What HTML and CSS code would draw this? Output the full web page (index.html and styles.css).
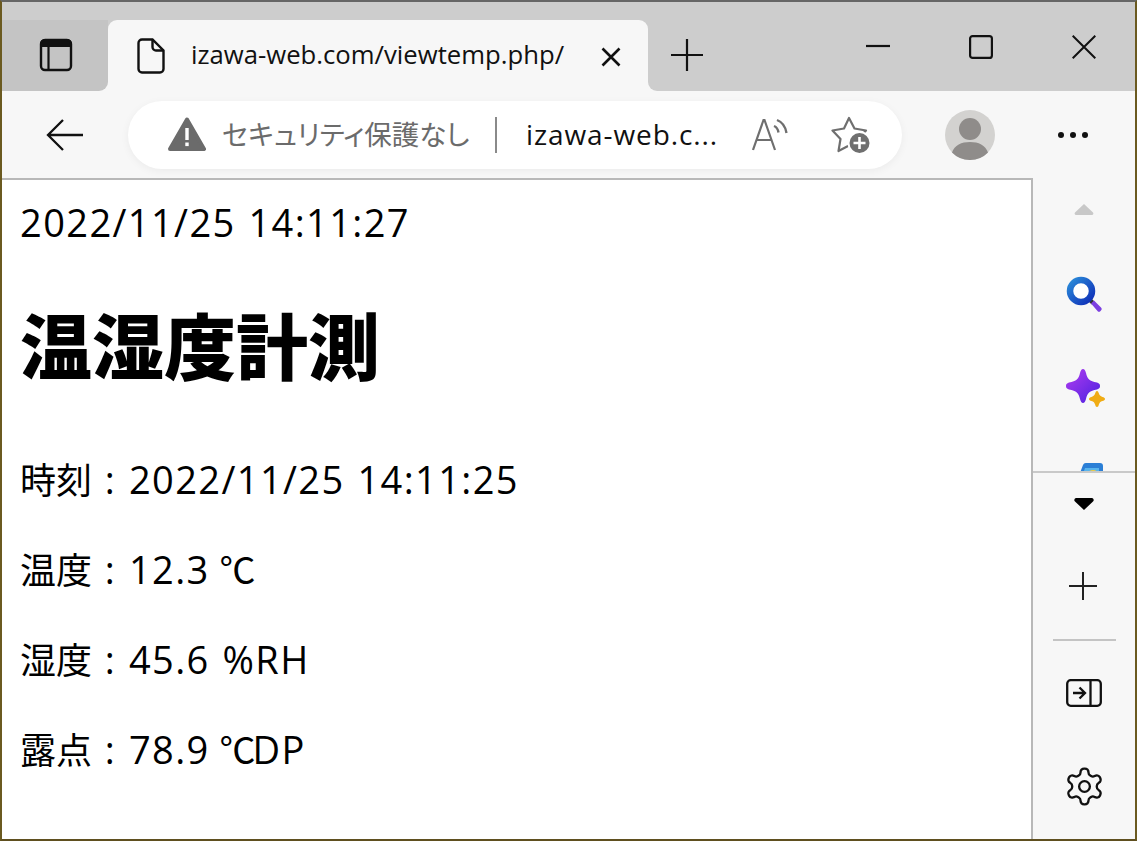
FILE: index.html
```html
<!DOCTYPE html>
<html lang="ja">
<head>
    <meta charset="UTF-8">
    <meta name="viewport" content="width=device-width, initial-scale=1.0">
    <title>温湿度計測</title>
    <link rel="stylesheet" href="styles.css">
</head>
<body>
<div class="window">
    <div class="titlebar">
        <div class="tab-side">
            <svg width="34" height="34" viewBox="0 0 34 34"><rect x="2" y="2" width="30" height="30" rx="4" fill="#c4c4c4" stroke="#111" stroke-width="2.4"/><path d="M2 8V6a4 4 0 0 1 4-4h22a4 4 0 0 1 4 4v2z" fill="#111" stroke="#111" stroke-width="2"/><path d="M9.5 8v24" stroke="#111" stroke-width="2.2"/></svg>
        </div>
        <div class="tab">
            <svg class="tab-icon" width="28" height="36" viewBox="0 0 28 36"><path d="M5 1.5h10.5L26.5 12.5V31a3.5 3.5 0 0 1-3.5 3.5H5A3.5 3.5 0 0 1 1.5 31V5A3.5 3.5 0 0 1 5 1.5z" fill="none" stroke="#111" stroke-width="2.4"/><path d="M15.5 1.5V9a3.5 3.5 0 0 0 3.5 3.5h7.5" fill="none" stroke="#111" stroke-width="2.4"/></svg>
            <span class="tab-title">izawa-web.com/viewtemp.php/</span>
            <svg class="tab-close" width="20" height="20" viewBox="0 0 20 20"><path d="M1.5 1.5l17 17M18.500 1.500l-17 17" stroke="#111" stroke-width="2.6"/></svg>
        </div>
        <div class="tab-new">
            <svg width="32" height="32" viewBox="0 0 32 32"><path d="M0 16h32M16 0v32" stroke="#111" stroke-width="2.2"/></svg>
        </div>
        <div class="controls">
            <div class="control"><svg width="24" height="24" viewBox="0 0 24 24"><path d="M0 11h24" stroke="#111" stroke-width="2.2"/></svg></div>
            <div class="control"><svg width="24" height="24" viewBox="0 0 24 24"><rect x="1.100" y="1.100" width="21.800" height="21.800" rx="2.500" fill="none" stroke="#111" stroke-width="2.200"/></svg></div>
            <div class="control"><svg width="24" height="24" viewBox="0 0 24 24"><path d="M.7.7l22.600 22.600M23.300.7L.7 23.300" stroke="#111" stroke-width="2"/></svg></div>
        </div>
    </div>

    <div class="toolbar">
        <div class="back">
            <svg width="38" height="32" viewBox="0 0 38 32"><path d="M37 16H2M17 1L2 16l15 15" fill="none" stroke="#111" stroke-width="2.300"/></svg>
        </div>
        <div class="address">
            <svg class="warn" width="38" height="35" viewBox="0 0 38 35"><path d="M19 2.500L36 32H2z" fill="#6b6b6b" stroke="#6b6b6b" stroke-width="4" stroke-linejoin="round"/><rect x="17.300" y="11" width="3.400" height="12" fill="#fff"/><rect x="17.300" y="25.500" width="3.400" height="3.600" fill="#fff"/></svg>
            <span class="security">セキュリティ保護なし</span>
            <span class="sep"></span>
            <span class="url">izawa-web.c...</span>
            <svg class="read" width="38" height="36" viewBox="0 0 38 36"><path d="M1 33L11.500 3h1L23 33M4.500 23h15" fill="none" stroke="#6f6f6f" stroke-width="2.200"/><path d="M22 9c2.500 1 4 3.500 4.500 6.500M25 3c5 2 8.500 6.500 9.500 13" fill="none" stroke="#6f6f6f" stroke-width="2.400"/></svg>
            <svg class="fav" width="40" height="38" viewBox="0 0 40 38"><path d="M18 2l5.500 10.500 11.500 2-8 8.500 1.500 12-10.500-5.500L7.500 35l2-12-8-8.500 11.500-2z" fill="none" stroke="#6f6f6f" stroke-width="2.200" stroke-linejoin="round"/><circle cx="28.500" cy="27" r="12" fill="#fff"/><circle cx="28.500" cy="27" r="10" fill="#6f6f6f"/><path d="M22.500 27h12M28.500 21v12" stroke="#fff" stroke-width="2.600"/></svg>
        </div>
        <div class="avatar">
            <svg width="50" height="50" viewBox="0 0 50 50"><circle cx="25" cy="25" r="25" fill="#d3d2d0"/><circle cx="25" cy="19" r="11" fill="#8f8c8a"/><path d="M7 42.500C9.500 35 16.500 32 25 32s15.500 3 18 10.500A25 25 0 0 1 25 50 25 25 0 0 1 7 42.500z" fill="#8f8c8a"/></svg>
        </div>
        <div class="more"><span></span><span></span><span></span></div>
    </div>

    <div class="main">
        <div class="page">
            <div class="now">2022/11/25 14:11:27</div>
            <h1>温湿度計測</h1>
            <p><span class="cjk">時刻</span> : 2022/11/25 14:11:25</p>
            <p><span class="cjk">温度</span> : 12.3 <span class="cjk deg">℃</span></p>
            <p><span class="cjk">湿度</span> : 45.6 %RH</p>
            <p><span class="cjk">露点</span> : 78.9 <span class="cjk deg">℃</span>DP</p>
        </div>
        <div class="sidebar">
            <div class="side-apps">
                <svg class="arrow-up" width="20" height="12" viewBox="0 0 20 12"><path d="M10 1L19 9.500a1.500 1.500 0 0 1-1 2.500H2a1.500 1.500 0 0 1-1-2.500z" fill="#c8c8c8"/></svg>
                <svg class="app-search" width="38" height="38" viewBox="0 0 38 38"><defs><linearGradient id="lens" x1="0" y1="0" x2="1" y2="1"><stop offset="0" stop-color="#2a8ad8"/><stop offset="1" stop-color="#0f2fb8"/></linearGradient></defs><path d="M24 24l3 3" stroke="#333" stroke-width="4"/><path d="M25 27.500l3-3 7 7a2 2 0 0 1 0 3l-.5.500a2 2 0 0 1-3 0z" fill="#7c3fe0"/><circle cx="15" cy="15" r="11" fill="#fff" stroke="url(#lens)" stroke-width="6.500"/></svg>
                <svg class="app-spark" width="40" height="40" viewBox="0 0 40 40"><defs><linearGradient id="star" x1="0" y1="0" x2="1" y2="1"><stop offset="0" stop-color="#b23cf0"/><stop offset="1" stop-color="#4a20e0"/></linearGradient></defs><path d="M17 0c1.500 0 2.200 1.500 3 4 1.200 6 3.500 8 11 9.500 2.500.8 3 1.800 3 3.500s-.5 2.700-3 3.500c-7.500 1.500-9.800 3.500-11 9.500-.8 2.500-1.500 4-3 4s-2.200-1.500-3-4c-1.200-6-3.500-8-11-9.500C.500 19.700 0 18.700 0 17s.5-2.700 3-3.500C10.500 12 12.800 10 14 4c.8-2.500 1.500-4 3-4z" fill="url(#star)"/><path d="M31 22c1 0 1.400 1 1.800 2.300.6 2 1.500 3 3.700 3.700 1.400.4 2.500.9 2.500 2s-1.100 1.600-2.500 2c-2.200.7-3.100 1.700-3.700 3.700C32.400 37 32 38 31 38s-1.400-1-1.800-2.300c-.6-2-1.500-3-3.700-3.700-1.400-.4-2.500-.9-2.500-2s1.100-1.600 2.500-2c2.200-.7 3.100-1.700 3.700-3.700C29.600 23 30 22 31 22z" fill="#f0ac14"/></svg>
                <svg class="app-clip" width="28" height="24" viewBox="0 0 28 24"><path d="M0 24L8 3a3 3 0 0 1 3-2h14a3 3 0 0 1 3 3v20z" fill="#2b7fd6"/><path d="M4 24L10 6h14v18z" fill="#58b4ec"/><circle cx="18" cy="15" r="7" fill="#f4cc3c"/></svg>
            </div>
            <div class="side-tools">
                <svg class="arrow-down" width="20" height="12" viewBox="0 0 20 12"><path d="M10 12L1 3.500A2 2 0 0 1 2 0h16a2 2 0 0 1 1 3.500z" fill="#000"/></svg>
                <svg class="side-add" width="28" height="28" viewBox="0 0 28 28"><path d="M0 14h28M14 0v28" stroke="#222" stroke-width="2"/></svg>
                <div class="side-line"></div>
                <svg class="side-panel" width="36" height="28" viewBox="0 0 36 28"><rect x="1.200" y="1.200" width="33.600" height="25.600" rx="3.500" fill="none" stroke="#111" stroke-width="2.300"/><path d="M24.500 1v26" stroke="#111" stroke-width="2.300"/><path d="M7 14h12M13.500 8.500L19 14l-5.500 5.500" fill="none" stroke="#111" stroke-width="2.300"/></svg>
                <svg class="side-gear" width="43" height="43" viewBox="0 0 24 24" fill="none" stroke="#111" stroke-width="1.300" stroke-linejoin="round"><path d="M12.220 2h-.44a2 2 0 0 0-2 2v.18a2 2 0 0 1-1 1.730l-.43.250a2 2 0 0 1-2 0l-.15-.080a2 2 0 0 0-2.730.730l-.22.380a2 2 0 0 0 .730 2.730l.15.100a2 2 0 0 1 1 1.720v.510a2 2 0 0 1-1 1.740l-.15.090a2 2 0 0 0-.730 2.730l.22.380a2 2 0 0 0 2.730.730l.15-.080a2 2 0 0 1 2 0l.43.250a2 2 0 0 1 1 1.730V20a2 2 0 0 0 2 2h.44a2 2 0 0 0 2-2v-.18a2 2 0 0 1 1-1.730l.43-.250a2 2 0 0 1 2 0l.15.080a2 2 0 0 0 2.730-.730l.22-.390a2 2 0 0 0-.730-2.730l-.15-.080a2 2 0 0 1-1-1.740v-.5a2 2 0 0 1 1-1.740l.15-.090a2 2 0 0 0 .730-2.730l-.22-.380a2 2 0 0 0-2.730-.730l-.15.080a2 2 0 0 1-2 0l-.43-.250a2 2 0 0 1-1-1.730V4a2 2 0 0 0-2-2z"/><circle cx="12" cy="12" r="3"/></svg>
            </div>
        </div>
    </div>
</div>
</body>
</html>
```

FILE: styles.css
```css
html, body {
    margin: 0;
    height: 100%;
    overflow: hidden;
}

body {
    font-family: "Open Sans", "Noto Sans CJK JP", sans-serif;
    color: #000;
}

svg {
    display: block;
    flex: none;
}

.window {
    box-sizing: border-box;
    width: 1137px;
    height: 841px;
    display: flex;
    flex-direction: column;
    border-top: 2px solid #666;
    border-bottom: 2px solid #5f4f1f;
    border-left: 2px solid #6b5a20;
    border-right: 2px solid #6b5a20;
}

/* title bar */
.titlebar {
    height: 89px;
    flex: none;
    display: flex;
    align-items: flex-end;
    background: linear-gradient(#cdcdcd 70px, #f7f7f7 70px);
}

.tab-side {
    width: 106px;
    height: 71px;
    display: flex;
    align-items: center;
    justify-content: center;
    padding: 0 0 2px 2px;
    box-sizing: border-box;
    background-color: #c4c4c4;
    border-bottom-right-radius: 9px;
}

.tab {
    width: 540px;
    height: 71px;
    display: flex;
    align-items: center;
    box-sizing: border-box;
    padding-left: 29px;
    background-color: #f7f7f7;
    border-radius: 9px 9px 0 0;
}

.tab-icon {
    margin-right: 26px;
}

.tab-title {
    width: 410px;
    flex: none;
    margin-bottom: 2px;
    font-size: 25.7px;
    white-space: nowrap;
    color: #111;
}

.tab-close {
    margin-top: 2px;
}

.tab-new {
    flex: 1;
    height: 89px;
    display: flex;
    align-items: center;
    box-sizing: border-box;
    padding: 17px 0 0 23px;
    background-color: #cdcdcd;
    border-bottom-left-radius: 9px;
}

.controls {
    height: 89px;
    display: flex;
    background-color: #cdcdcd;
}

.control {
    width: 103px;
    height: 90px;
    display: flex;
    align-items: center;
    justify-content: center;
}

/* toolbar */
.toolbar {
    height: 87px;
    flex: none;
    display: flex;
    align-items: center;
    background-color: #f7f7f7;
}

.back {
    width: 126px;
    flex: none;
    display: flex;
    justify-content: center;
}

.address {
    width: 774px;
    height: 68px;
    flex: none;
    box-sizing: border-box;
    padding-left: 40px;
    display: flex;
    align-items: center;
    background-color: #fff;
    border-radius: 34px;
    box-shadow: 0 2px 8px rgba(0, 0, 0, 0.05);
}

.security {
    margin-left: 16px;
    margin-bottom: 4px;
    width: 246px;
    flex: none;
    font-size: 27.5px;
    font-feature-settings: "palt";
    white-space: nowrap;
    color: #6b6b6b;
}

.sep {
    width: 2px;
    height: 36px;
    flex: none;
    margin-left: 27px;
    background-color: #8a8a8a;
}

.url {
    width: 226px;
    flex: none;
    margin-left: 29px;
    margin-bottom: 2px;
    font-size: 28px;
    letter-spacing: 0.9px;
    white-space: nowrap;
    color: #111;
}

.read {
    margin-right: 41px;
}

.avatar {
    margin-left: 43px;
}

.more {
    margin-left: 63px;
    display: flex;
    gap: 6px;
}

.more span {
    width: 6px;
    height: 6px;
    border-radius: 50%;
    background-color: #111;
}

/* page */
.main {
    flex: 1;
    min-height: 0;
    display: flex;
}

.page {
    width: 1031px;
    flex: none;
    box-sizing: border-box;
    padding: 15px 18px 0 18px;
    background-color: #fff;
    border-top: 2px solid #b8b8b8;
    border-right: 2px solid #b8b8b8;
    font-size: 38px;
    line-height: 54px;
    letter-spacing: 1.4px;
    word-spacing: 1.5px;
}

.page h1 {
    font-size: 72px;
    font-weight: 900;
    letter-spacing: 0;
    line-height: 80px;
    margin: 57px 0 66px;
}

.page p {
    margin: 0 0 36px;
}

.cjk {
    font-family: "Noto Sans CJK JP", sans-serif;
    font-size: 36px;
    line-height: 1;
    letter-spacing: 0;
}

.deg {
    margin: 0 -3px;
}

/* sidebar */
.sidebar {
    flex: 1;
    display: flex;
    flex-direction: column;
    background-color: #f7f7f7;
}

.side-apps {
    height: 295px;
    flex: none;
    box-sizing: border-box;
    overflow: hidden;
    display: flex;
    flex-direction: column;
    align-items: center;
    border-bottom: 2px solid #c9c9c9;
}

.arrow-up {
    margin-top: 25px;
}

.app-search {
    margin-top: 61px;
    margin-left: 1px;
}

.app-spark {
    margin-top: 55px;
    margin-left: 4px;
}

.app-clip {
    margin-top: 53px;
    margin-left: 9px;
}

.side-tools {
    flex: 1;
    display: flex;
    flex-direction: column;
    align-items: center;
}

.arrow-down {
    margin-top: 25px;
}

.side-add {
    margin-top: 62px;
    margin-left: -2px;
}

.side-line {
    width: 63px;
    height: 2px;
    margin-top: 39px;
    background-color: #c4c4c4;
}

.side-panel {
    margin-top: 38px;
}

.side-gear {
    margin-top: 58px;
}
```
